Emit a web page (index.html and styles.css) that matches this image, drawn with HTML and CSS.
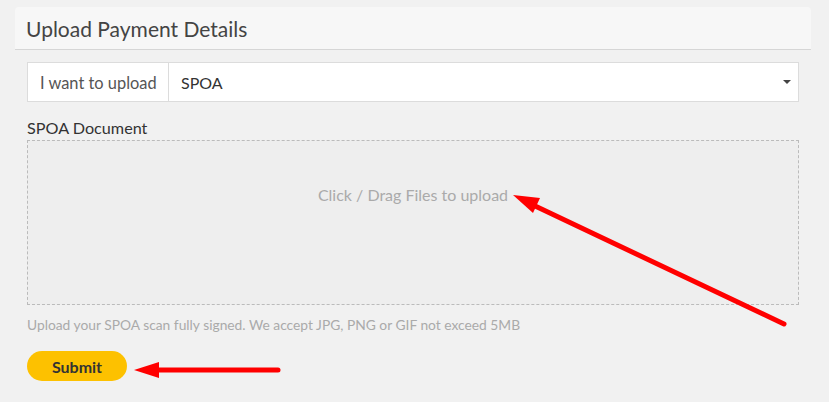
FILE: index.html
```html
<!DOCTYPE html>
<html lang="en">
<head>
<meta charset="utf-8">
<title>Upload Payment Details</title>
<link rel="stylesheet" href="styles.css">
</head>
<body>
<div class="page">
  <section class="panel">
    <header class="panel-head">
      <h2 class="panel-title">Upload Payment Details</h2>
    </header>
    <div class="panel-body">
      <div class="input-group">
        <span class="addon">I want to upload</span>
        <div class="select">
          <span class="select-value">SPOA</span>
          <span class="caret"></span>
        </div>
      </div>
      <label class="field-label">SPOA Document</label>
      <div class="dropzone">
        <span class="dz-text">Click / Drag Files to upload</span>
      </div>
      <p class="help">Upload your SPOA scan fully signed. We accept JPG, PNG or GIF not exceed 5MB</p>
      <button class="btn-submit" type="button">Submit</button>
    </div>
  </section>
  <svg class="annotations" width="829" height="402" viewBox="0 0 829 402" aria-hidden="true">
    <line x1="784" y1="324" x2="533" y2="205" stroke="#ff0000" stroke-width="5" stroke-linecap="round"/>
    <polygon points="513,195 533,213 540,198" fill="#ff0000"/>
    <line x1="278" y1="370" x2="156" y2="370" stroke="#ff0000" stroke-width="5" stroke-linecap="round"/>
    <polygon points="134,370 159,362 159,378" fill="#ff0000"/>
  </svg>
</div>
</body>
</html>
```
FILE: styles.css
```css
* { box-sizing: border-box; }
html, body { margin: 0; padding: 0; }
body {
  background: #f1f1f1;
  font-family: Lato, "Open Sans", sans-serif;
  color: #333;
  width: 829px;
  height: 402px;
  overflow: hidden;
}
.page {
  position: relative;
  padding: 7px 18px 0 15px;
  height: 402px;
}
.panel-head {
  background: #f7f7f7;
  border-bottom: 1px solid #d6d6d6;
  border-radius: 4px 4px 0 0;
  height: 43px;
  padding: 0 11px;
  display: flex;
  align-items: center;
}
.panel-title {
  margin: 0;
  font-size: 21px;
  font-weight: 400;
  color: #444;
}
.panel-body {
  padding: 12px 12px 0;
}
.input-group {
  display: flex;
  height: 40px;
  border: 1px solid #dcdcdc;
  background: #fff;
}
.addon {
  width: 141px;
  flex: none;
  display: flex;
  align-items: center;
  padding-left: 12px;
  border-right: 1px solid #dcdcdc;
  font-size: 16.4px;
  color: #555;
}
.select {
  flex: 1;
  display: flex;
  align-items: center;
  justify-content: space-between;
  padding: 0 7px 0 12px;
}
.select-value {
  font-size: 16px;
  color: #333;
}
.caret {
  width: 0;
  height: 0;
  border-left: 4px solid transparent;
  border-right: 4px solid transparent;
  border-top: 4px solid #444;
}
.field-label {
  display: block;
  margin-top: 16px;
  line-height: 20px;
  font-size: 16.2px;
  color: #333;
}
.dropzone {
  margin-top: 2px;
  height: 165px;
  border: 1px dashed #bbb;
  background: #eeeeee;
  padding-top: 44px;
  text-align: center;
}
.dz-text {
  display: block;
  line-height: 20px;
  font-size: 16px;
  color: #aaa;
}
.help {
  margin: 10px 0 0;
  line-height: 20px;
  font-size: 13.8px;
  color: #aaa;
}
.btn-submit {
  display: block;
  margin-top: 16px;
  width: 100px;
  height: 30px;
  border: 0;
  border-radius: 15px;
  background: #fdc100;
  font-family: inherit;
  font-size: 16px;
  font-weight: 700;
  color: #333;
  padding: 0;
}
.annotations {
  position: absolute;
  left: 0;
  top: 0;
  pointer-events: none;
}
```
